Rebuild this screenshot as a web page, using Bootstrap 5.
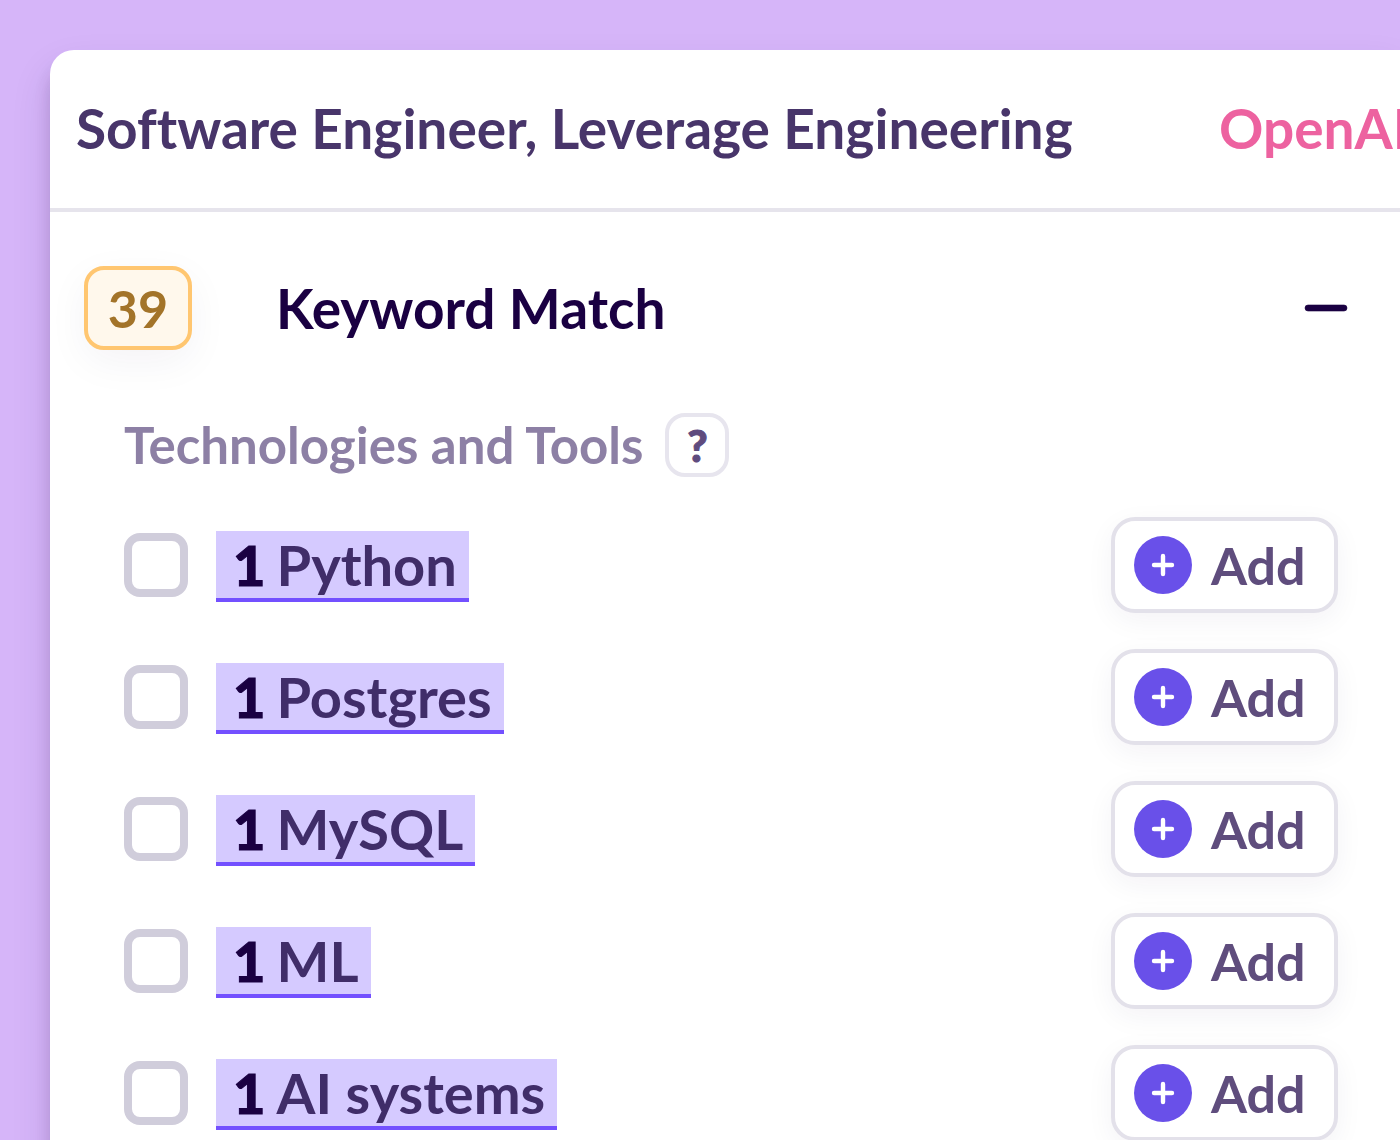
<!DOCTYPE html>
<html lang="en">
<head>
<meta charset="utf-8">
<meta name="viewport" content="width=device-width, initial-scale=1">
<title>Keyword Match</title>
<link href="https://cdn.jsdelivr.net/npm/bootstrap@5.3.0/dist/css/bootstrap.min.css" rel="stylesheet">
<style>
body{font-family:Lato,"Liberation Sans",sans-serif;font-variant-ligatures:none;background:#d6b5f9;overflow-x:hidden}
.page{padding:50px 0 0 50px;min-height:100vh}
.panel{background:#fff;border-radius:24px 0 0 0;box-shadow:0 16px 16px rgba(40,20,70,.16),0 20px 40px rgba(40,20,70,.12)}
.panel-top{height:162px;padding:0 0 2px 26px;border-bottom:4px solid #e6e4ec;white-space:nowrap;overflow:hidden}
.job,.company{font-size:55px;line-height:64px;font-weight:700}
.job{color:#48356a;width:1143px;flex:none}
.company{color:#ed62a0;text-decoration:none}
.section-head{padding:54px 52px 0 34px}
.score{width:108px;height:84px;border:4px solid #ffc670;border-radius:20px;background:#fff8ec;color:#a37429;font-size:52px;line-height:76px;font-weight:700;box-shadow:0 12px 40px rgba(30,10,80,.05)}
.section-title{font-size:55px;line-height:64px;font-weight:700;color:#1a0042;margin-left:84px}
.plain{border:0;background:none;padding:0}
.section-body{padding:63px 62px 36px 74px}
.group-title{font-size:51px;line-height:64px;font-weight:700;color:#8d80a5}
.help{width:64px;height:64px;border:4px solid #e7e5ee;border-radius:20px;background:#fff;color:#5f4b7e;font-size:44px;line-height:52px;font-weight:900;padding:0;margin-left:22px;-webkit-text-stroke:1px currentColor}
.keywords{padding-top:40px;gap:36px}
.keyword-row{height:96px}
.tick.form-check-input{width:64px;height:64px;border:8px solid #d0cddb;border-radius:16px;margin:0;flex:none}
.term{margin:2px 0 0 28px;padding:0 12px 0 17px;gap:11px;background:#d5caff;border-bottom:4px solid #7350ff;font-size:56px;line-height:67px;font-weight:700;color:#402d69}
.term b{font-family:"Lato Black",Lato,sans-serif;font-weight:900;color:#1a0042;-webkit-text-stroke:1px currentColor}
.add{height:96px;width:227px;border:4px solid #e3e1ea;border-radius:24px;background:#fff;color:#5f4d7d;font-size:52px;line-height:64px;font-weight:700;padding:0 0 0 19px;gap:19px;box-shadow:0 8px 28px rgba(30,10,80,.05)}
</style>
</head>
<body>
<svg class="d-none" aria-hidden="true"><symbol id="plus" viewBox="0 0 58 58"><circle cx="29" cy="29" r="29" fill="#6950e9"/><path d="M29 20v18M20 29h18" stroke="#fff" stroke-width="4.4" stroke-linecap="round"/></symbol></svg>
<div class="page">
<main class="panel">
<header class="panel-top d-flex align-items-center">
<h1 class="job mb-0">Software Engineer, Leverage Engineering</h1>
<a class="company" href="#">OpenAI</a>
</header>
<section>
<div class="section-head d-flex align-items-center">
<span class="score text-center">39</span>
<h2 class="section-title mb-0">Keyword Match</h2>
<button class="plain ms-auto d-flex" type="button" aria-label="Collapse"><svg width="44" height="8" viewBox="0 0 44 8"><rect x="1" y="1" width="42" height="6" rx="3" fill="#1a0042" stroke="#1a0042" stroke-width=".6"/></svg></button>
</div>
<div class="section-body">
<div class="d-flex align-items-center">
<h3 class="group-title mb-0">Technologies and Tools</h3>
<button class="help" type="button">?</button>
</div>
<div class="keywords d-flex flex-column">
<div class="keyword-row d-flex align-items-center">
<input class="tick form-check-input" type="checkbox" id="k1"><label class="term d-flex" for="k1"><b>1</b><span>Python</span></label>
<button class="add ms-auto d-flex align-items-center" type="button"><svg width="58" height="58"><use href="#plus"/></svg>Add</button>
</div>
<div class="keyword-row d-flex align-items-center">
<input class="tick form-check-input" type="checkbox" id="k2"><label class="term d-flex" for="k2"><b>1</b><span>Postgres</span></label>
<button class="add ms-auto d-flex align-items-center" type="button"><svg width="58" height="58"><use href="#plus"/></svg>Add</button>
</div>
<div class="keyword-row d-flex align-items-center">
<input class="tick form-check-input" type="checkbox" id="k3"><label class="term d-flex" for="k3"><b>1</b><span>MySQL</span></label>
<button class="add ms-auto d-flex align-items-center" type="button"><svg width="58" height="58"><use href="#plus"/></svg>Add</button>
</div>
<div class="keyword-row d-flex align-items-center">
<input class="tick form-check-input" type="checkbox" id="k4"><label class="term d-flex" for="k4"><b>1</b><span>ML</span></label>
<button class="add ms-auto d-flex align-items-center" type="button"><svg width="58" height="58"><use href="#plus"/></svg>Add</button>
</div>
<div class="keyword-row d-flex align-items-center">
<input class="tick form-check-input" type="checkbox" id="k5"><label class="term d-flex" for="k5"><b>1</b><span>AI systems</span></label>
<button class="add ms-auto d-flex align-items-center" type="button"><svg width="58" height="58"><use href="#plus"/></svg>Add</button>
</div>
</div>
</div>
</section>
</main>
</div>
<script src="https://cdn.jsdelivr.net/npm/bootstrap@5.3.0/dist/js/bootstrap.bundle.min.js"></script>
</body>
</html>
